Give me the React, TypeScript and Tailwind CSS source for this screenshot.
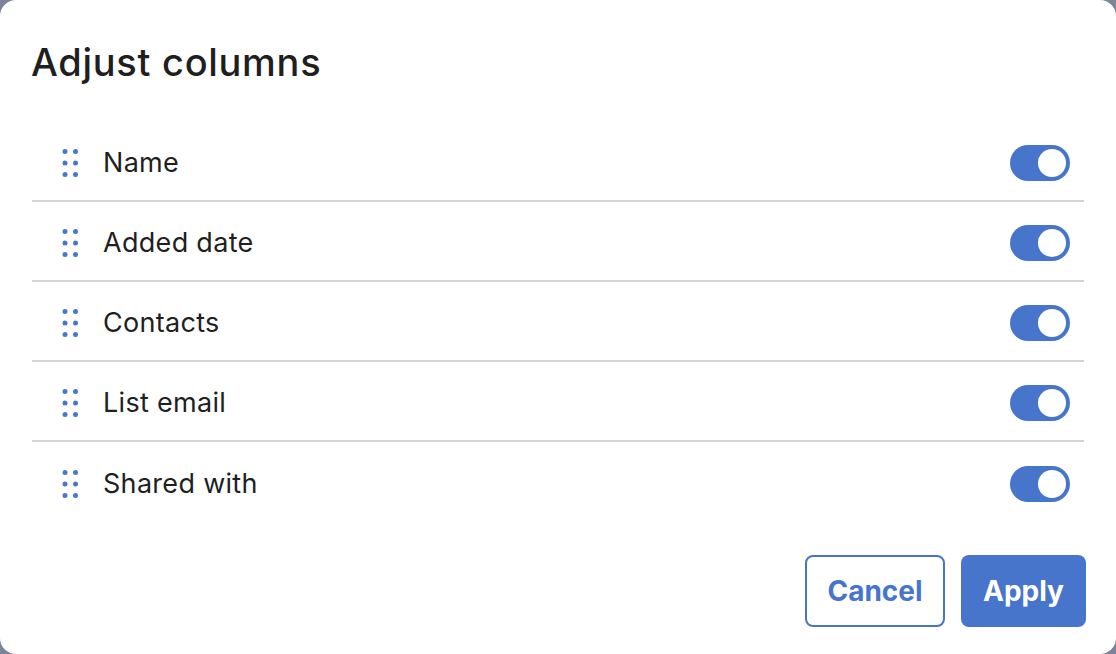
import React from "react";

const cols = ["Name", "Added date", "Contacts", "List email", "Shared with"];

function Dots() {
  return (
    <svg width="16" height="30" viewBox="0 0 16 30" className="shrink-0">
      {[0, 1, 2].map((r) =>
        [0, 1].map((c) => (
          <circle key={`${r}-${c}`} cx={3 + c * 10.5} cy={3.5 + r * 11.5} r="2.5" fill="#4a76cc" />
        ))
      )}
    </svg>
  );
}

function Toggle() {
  return (
    <div className="w-[60px] h-[36px] rounded-full bg-[#4775cc] flex items-center justify-end pr-[4px]">
      <div className="w-[28px] h-[28px] rounded-full bg-white" />
    </div>
  );
}

export default function App() {
  return (
    <div className="w-[1116px] h-[654px] bg-[#7b8498]" style={{ fontFamily: "Inter, 'Noto Sans', sans-serif" }}>
      <div className="w-full h-full bg-white rounded-[16px] flex flex-col">
        <div className="h-[122px] flex items-center pl-[31px] pt-[2px]">
          <h1 className="text-[38px] font-medium text-[#1f1f1f] tracking-[0.7px]">Adjust columns</h1>
        </div>
        <div className="mx-[32px] flex flex-col">
          {cols.map((c, i) => (
            <div
              key={c}
              className={`h-[80px] flex items-center pt-[4px] pl-[30px] pr-[14px] ${i < cols.length - 1 ? "border-b-2 border-[#d4d4d4]" : ""}`}
            >
              <Dots />
              <span className="ml-[25px] text-[27px] tracking-[0.3px] text-[#1f1f1f]">{c}</span>
              <div className="ml-auto">
                <Toggle />
              </div>
            </div>
          ))}
        </div>
        <div className="flex justify-end gap-[16px] pr-[30px] mt-[33px]">
          <button className="w-[140px] h-[72px] rounded-[8px] border-2 border-[#4775cc] bg-white text-[#4775cc] text-[28px] font-bold">
            Cancel
          </button>
          <button className="w-[125px] h-[72px] rounded-[8px] bg-[#4775cc] text-white text-[28px] font-bold">
            Apply
          </button>
        </div>
      </div>
    </div>
  );
}
